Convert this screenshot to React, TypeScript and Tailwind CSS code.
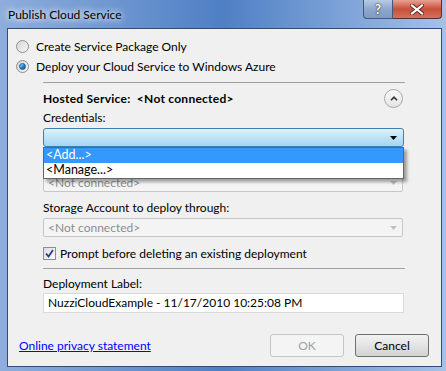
import React from 'react';

const font = { fontFamily: 'Lato, "Open Sans", sans-serif' };

const Radio = ({ checked }: { checked?: boolean }) => (
  <span className="w-[13px] h-[13px] rounded-full border border-[#8e8f8f] bg-gradient-to-br from-[#d4d4d4] to-[#f8f8f8] flex items-center justify-center shrink-0">
    {checked && (
      <span className="w-[7px] h-[7px] rounded-full bg-gradient-to-br from-[#a9e0fb] via-[#2a8cd4] to-[#0d4f99] border border-[#1d5a93]" />
    )}
  </span>
);

const Arrow = ({ color }: { color: string }) => (
  <svg width="7" height="4" viewBox="0 0 7 4">
    <path d="M0 0h7L3.5 4z" fill={color} />
  </svg>
);

const DisabledCombo = () => (
  <div className="h-[19px] w-[360px] rounded-[2px] border border-[#c6c6c6] bg-[#f4f4f4] flex items-center justify-between pl-[4px] pr-[5px] text-[#8d8d8d]">
    <span>&lt;Not connected&gt;</span>
    <Arrow color="#c0c0c0" />
  </div>
);

const App: React.FC = () => {
  return (
    <div
      className="w-[446px] h-[371px] flex flex-col bg-gradient-to-r from-[#8eaedc] via-[#4f7fc4] to-[#a5c1e6] text-[12px] text-black leading-none"
      style={font}
    >
      {/* Title bar */}
      <div className="h-[28px] flex justify-between shrink-0">
        <span className="pl-[8px] pt-[9px] text-[12px] [text-shadow:0_0_6px_#ffffff,0_0_10px_#ffffff]">
          Publish Cloud Service
        </span>
        <div className="flex items-start mr-[4px]">
          <div className="w-[30px] h-[19px] rounded-bl-[4px] border border-[#3e5a80] border-t-0 bg-gradient-to-b from-[#b7cbe4] via-[#8ea8cc] to-[#7e9bc3] flex items-center justify-center text-white font-bold text-[13px] [text-shadow:0_0_1px_#333,0_0_2px_#333]">
            ?
          </div>
          <div className="w-[49px] h-[19px] rounded-br-[4px] border border-[#5a2e28] border-t-0 border-l-0 bg-gradient-to-b from-[#e8a193] via-[#c94e3a] to-[#d4715c] flex items-center justify-center">
            <svg width="14" height="11" viewBox="0 0 14 11">
              <path d="M2 1.5L12 9.5M12 1.5L2 9.5" stroke="#5b2a22" strokeWidth="4" strokeLinecap="square" />
              <path d="M2 1.5L12 9.5M12 1.5L2 9.5" stroke="#ffffff" strokeWidth="2.2" strokeLinecap="square" />
            </svg>
          </div>
        </div>
      </div>

      {/* Client area */}
      <div className="flex-1 ml-[7px] mr-[4px] mb-[4px] border border-[#2f4d78] bg-[#f0f0f0] flex flex-col">
        <div className="pl-[8px] pt-[11px] flex flex-col gap-[7px]">
          <label className="flex items-center gap-[7px] h-[13px]">
            <Radio />
            <span>Create Service Package Only</span>
          </label>
          <label className="flex items-center gap-[7px] h-[13px]">
            <Radio checked />
            <span>Deploy your Cloud Service to Windows Azure</span>
          </label>
        </div>

        <div className="pl-[35px] flex flex-col w-[398px]">
          <div className="mt-[9px] h-px bg-[#a0a0a0] w-[362px]" />

          <div className="mt-[6px] flex items-center justify-between w-[362px] h-[19px]">
            <span className="font-bold tracking-[0.25px]">Hosted Service:&nbsp; &lt;Not connected&gt;</span>
            <span className="w-[19px] h-[19px] rounded-full border border-[#a8a8a8] bg-gradient-to-b from-[#fafafa] to-[#e4e4e4] flex items-center justify-center mr-[2px]">
              <svg width="8" height="5" viewBox="0 0 8 5">
                <path d="M1 4.2L4 1.2L7 4.2" stroke="#333" strokeWidth="1.6" fill="none" />
              </svg>
            </span>
          </div>

          <div className="mt-[3px] h-[14px] flex items-center">Credentials:</div>

          <div className="relative mt-[3px]">
            <div className="h-[19px] w-[361px] rounded-[3px] border border-[#3c7fb1] bg-gradient-to-b from-[#e0f2fc] via-[#bde3f7] to-[#a4d6f1] flex items-center justify-end pr-[6px]">
              <Arrow color="#000000" />
            </div>
            {/* open dropdown list */}
            <div className="absolute left-0 top-[19px] w-[361px] border border-[#646464] bg-white z-10 shadow-[3px_3px_3px_rgba(0,0,0,0.35)]">
              <div className="h-[15px] bg-[#3399ff] text-white flex items-center pl-[2px] text-[12.5px]">&lt;Add...&gt;</div>
              <div className="h-[15px] flex items-center pl-[2px] text-[12.5px]">&lt;Manage...&gt;</div>
            </div>
          </div>

          <div className="mt-[6px] h-[14px] flex items-center">Subscription:</div>
          <div className="mt-[6px]">
            <DisabledCombo />
          </div>

          <div className="mt-[9px] h-[14px] flex items-center">Storage Account to deploy through:</div>
          <div className="mt-[3px]">
            <DisabledCombo />
          </div>

          <label className="mt-[10px] flex items-center gap-[4px] h-[13px]">
            <span className="w-[13px] h-[13px] border border-[#8e8f8f] bg-gradient-to-br from-[#dcdcdc] to-[#fbfbfb] flex items-center justify-center shrink-0">
              <svg width="9" height="9" viewBox="0 0 9 9">
                <path d="M1 4.5L3.5 7.5L8 1" stroke="#21398f" strokeWidth="1.7" fill="none" />
              </svg>
            </span>
            <span>Prompt before deleting an existing deployment</span>
          </label>

          <div className="mt-[8px] h-px bg-[#a0a0a0] w-[362px]" />

          <div className="mt-[8px] h-[14px] flex items-center">Deployment Label:</div>
          <div className="mt-[2px] h-[20px] w-[361px] border border-[#dadada] bg-white flex items-center pl-[4px]">
            NuzziCloudExample - 11/17/2010 10:25:08 PM
          </div>
        </div>

        <div className="mt-auto mb-[9px] flex items-center justify-between pl-[11px] pr-[12px]">
          <a className="text-[#0000ff] underline cursor-pointer">Online privacy statement</a>
          <div className="flex gap-[11px]">
            <button className="w-[74px] h-[23px] rounded-[3px] border border-[#c5c5c5] bg-[#f4f4f4] text-[#a0a0a0]">OK</button>
            <button className="w-[74px] h-[23px] rounded-[3px] border border-[#707070] bg-gradient-to-b from-[#f2f2f2] via-[#e3e3e3] to-[#d2d2d2]">Cancel</button>
          </div>
        </div>
      </div>
    </div>
  );
};

export default App;
